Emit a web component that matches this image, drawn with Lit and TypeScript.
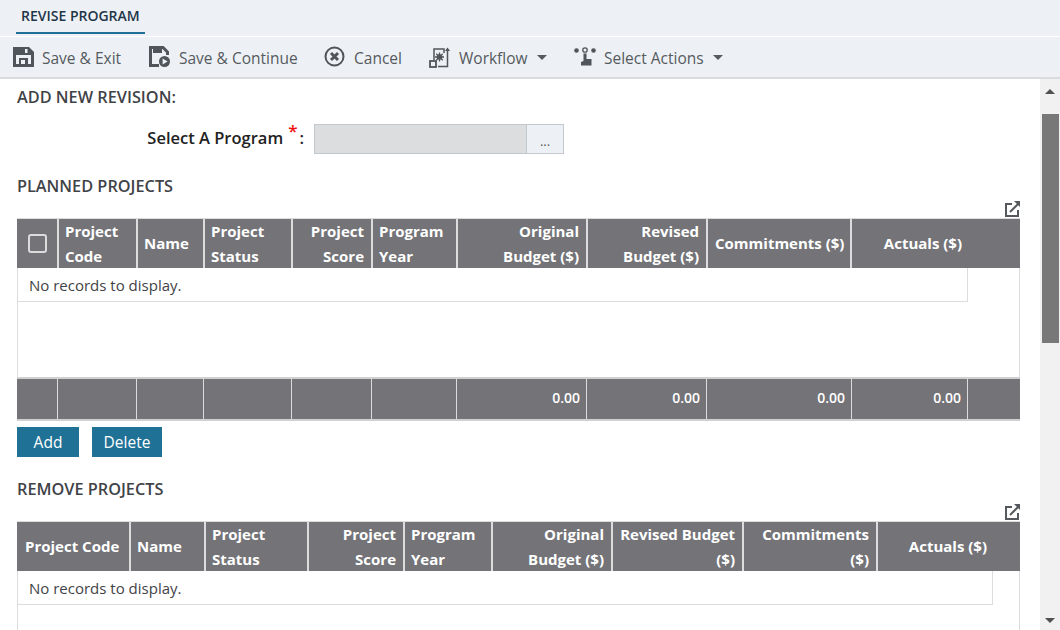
import { LitElement, html, css, svg } from "lit";
import { customElement } from "lit/decorators.js";

type Col = { t: string[]; r?: boolean; c?: boolean; i?: boolean };

const saveIcon = svg`<path d="M0 1h16l5 5v15H0z" fill="#50555b"/><path d="M3 9h15v9h-3v-6H6v6H3z" fill="#edf1f5"/><rect x="12" y="3" width="2.5" height="4" fill="#edf1f5"/><rect x="8" y="14" width="4" height="4" fill="#edf1f5"/>`;
const saveContIcon = svg`<path d="M10 19.5H1.5V1.5h12.5l4.5 4.5v3" fill="none" stroke="#50555b" stroke-width="3"/><path d="M4 2h9v5H4z" fill="#50555b"/><circle cx="15.5" cy="15.5" r="5.5" fill="#50555b"/><path d="M13.6 12.5l5 3-5 3z" fill="#edf1f5"/>`;
const cancelIcon = svg`<circle cx="10.5" cy="10.5" r="9" fill="none" stroke="#50555b" stroke-width="2"/><path d="M7 7l7 7M14 7l-7 7" stroke="#50555b" stroke-width="3"/>`;
const workflowIcon = svg`<path d="M5 14V3h10v4" fill="none" stroke="#50555b" stroke-width="1.5"/><path d="M9 20.5h9.5V3" fill="none" stroke="#50555b" stroke-width="1.5"/><rect x="1" y="15" width="6" height="6" fill="none" stroke="#50555b" stroke-width="1.8"/><circle cx="10.5" cy="11" r="2.8" fill="#50555b"/><path d="M10.5 6.5v9M6 11h9M7.3 7.8l6.4 6.4M13.7 7.8l-6.4 6.4" stroke="#50555b" stroke-width="1.3"/><path d="M16 5l2.5-3.5L21 5z" fill="#50555b"/>`;
const actionsIcon = svg`<circle cx="2.5" cy="4.5" r="2.3" fill="#50555b"/><circle cx="11" cy="4" r="2.2" fill="none" stroke="#50555b" stroke-width="1.3"/><circle cx="19.5" cy="4.5" r="2.3" fill="#50555b"/><path d="M9.5 7.5h3V13h5v6.5H7V16l2.5-1z" fill="#50555b"/>`;
const popIcon = svg`<path d="M8 3H2v12h12V9" fill="none" stroke="#55585c" stroke-width="2"/><path d="M6 11l8-8" stroke="#55585c" stroke-width="2"/><path d="M10 0h6v6z" fill="#55585c"/>`;

const planned: Col[] = [
  { t: [""], c: true },
  { t: ["Project", "Code"] },
  { t: ["Name"] },
  { t: ["Project", "Status"] },
  { t: ["Project", "Score"], r: true },
  { t: ["Program", "Year"] },
  { t: ["Original", "Budget ($)"], r: true },
  { t: ["Revised", "Budget ($)"], r: true },
  { t: ["Commitments ($)"], i: true },
  { t: ["Actuals ($)"], r: true },
];
const plannedGrid = "41px 79px 67px 88px 80px 85px 130px 120px 144px 117px 52px";
const plannedFoot = "41px 79px 67px 88px 80px 85px 130px 120px 145px 116px 52px";
const removed: Col[] = [
  { t: ["Project Code"], i: true },
  { t: ["Name"] },
  { t: ["Project", "Status"] },
  { t: ["Project", "Score"], r: true },
  { t: ["Program", "Year"] },
  { t: ["Original", "Budget ($)"], r: true },
  { t: ["Revised Budget", "($)"], r: true },
  { t: ["Commitments", "($)"], r: true },
  { t: ["Actuals ($)"], r: true },
];
const removedGrid = "113px 75px 103px 96px 88px 120px 131px 134px 116px 27px";

@customElement("app-root")
export class AppRoot extends LitElement {
  static styles = css`
    :host { display: block; width: 1060px; height: 630px; overflow: hidden; background: #fff;
      font-family: "Open Sans", "Liberation Sans", sans-serif; color: #3f4347; }
    * { box-sizing: border-box; }
    .tabs { height: 36px; background: #edf1f5; padding-left: 16px; display: flex; }
    .tab { width: 129px; height: 34px; border-bottom: 2px solid #1f6f97; color: #1f3548; font-size: 14px; font-weight: 600;
      padding: 6px 0 0 5px; line-height: 19px; white-space: nowrap; }
    .toolbar { height: 42px; margin-top: 1px; background: #edf1f5; border-bottom: 2px solid #d9dcdf; display: flex; align-items: center;
      padding: 0 0 1px 13px; font-size: 15.5px; color: #555a60; }
    .tool { display: flex; align-items: center; }
    .tool svg { display: block; }
    .tool span { margin-left: 8px; line-height: 20px; padding-top: 3px; }
    .tool.exit { width: 136px; }
    .tool.cont { width: 175px; }
    .tool.cancel { width: 105px; }
    .tool.flow { width: 145px; }
    .tool.cancel span { margin-left: 9px; }
    .caret { width: 0; height: 0; border: 5px solid transparent; border-top: 5px solid #555a60; border-bottom: 0; margin-left: 9px; margin-top: 2px; }
    .main { display: flex; height: 551px; }
    .content { width: 1040px; padding-left: 17px; overflow: hidden; }
    .scroll { width: 20px; background: #f1f1f1; display: flex; flex-direction: column; align-items: center; }
    .up { width: 0; height: 0; border: 5px solid transparent; border-bottom: 5px solid #505050; border-top: 0; margin-top: 10px; }
    .thumb { width: 17px; height: 229px; background: #787878; margin: 20px 0 0 1px; }
    .down { width: 0; height: 0; border: 5px solid transparent; border-top: 5px solid #505050; border-bottom: 0; margin-top: auto; margin-bottom: 7px; }
    h2 { margin: 0; font-size: 16.3px; line-height: 20px; font-weight: 600; color: #3f4347; white-space: nowrap; }
    .h-add { padding-top: 8px; height: 28px; }
    .field { display: flex; height: 30px; margin-top: 17px; }
    .label { width: 297px; display: flex; justify-content: flex-end; align-items: center; color: #222; font-weight: 600; font-size: 16.5px; white-space: nowrap; padding-bottom: 4px; }
    .star { color: #f01010; font-size: 17px; line-height: 17px; margin: -13px 0 0 5px; font-weight: 600; }
    .colon { margin-left: 2px; margin-right: 10px; }
    .input { width: 213px; height: 30px; background: #dcdddf; border: 1px solid #c3c8cc; }
    .dots { width: 37px; height: 30px; background: #edf1f5; border: 1px solid #c3c8cc; border-left: 0; color: #555; font-size: 13px; text-align: center; line-height: 32px; }
    .h-planned { margin-top: 22px; }
    .pop { display: flex; justify-content: flex-end; width: 1003px; height: 16px; margin-top: 5px; }
    .table { width: 1003px; border: 1px solid #dcdcdc; border-top: 0; border-bottom: 0; }
    .table.planned { height: 203px; margin-top: 1px; display: flex; flex-direction: column; }
    .table.removed { height: 200px; margin-top: 1px; }
    .head { display: grid; height: 50px; background: #737378; border-top: 1px solid #dcdcdc; margin: 0 -1px; padding: 0 0 0 1px; }
    .th { border-right: 2px solid #dcdcdc; color: #fff; font-weight: 700; font-size: 15px; line-height: 25px; padding: 0 7px 0 6px;
      display: flex; flex-direction: column; justify-content: center; white-space: nowrap; overflow: hidden; }
    .th.r { text-align: right; }
    .th.i { padding-left: 7px; }
    .th.c { align-items: center; padding: 0; }
    .th:last-child { border-right: 0; }
    .cb { width: 19px; height: 19px; border: 2px solid #dcdcdc; border-radius: 3px; background: #737378; }
    .none { height: 34px; font-size: 15px; color: #3f4347; border-right: 1px solid #dcdcdc; border-bottom: 1px solid #dcdcdc; padding: 7px 11px; line-height: 20px; white-space: nowrap; }
    .planned .none { width: 950px; }
    .removed .none { width: 975px; }
    .spacer { flex: 1; }
    .foot { display: grid; height: 44px; background: #737378; border-top: 2px solid #d0d0d0; border-bottom: 2px solid #d0d0d0; margin: 0 -1px; }
    .tf { border-right: 1px solid #dcdcdc; color: #fff; font-weight: 600; font-size: 14px; text-align: right; padding: 0 6px; line-height: 37px; }
    .tf:last-child { border-right: 0; }
    .btns { display: flex; gap: 13px; margin-top: 6px; }
    .btn { height: 30px; background: #1f7196; color: #fff; font-size: 15.5px; line-height: 30px; text-align: center; }
    .btn.add { width: 62px; }
    .btn.del { width: 70px; }
    .h-remove { margin-top: 22px; }
  `;

  private table(cols: Col[], grid: string) {
    return html`<div class="head" style="grid-template-columns:${grid}">
      ${cols.map(
        (c) => html`<div class="th ${c.r ? "r" : ""} ${c.c ? "c" : ""} ${c.i ? "i" : ""}">
          ${c.c ? html`<div class="cb"></div>` : c.t.map((l) => html`<div>${l}</div>`)}
        </div>`
      )}
    </div>`;
  }

  render() {
    const foot = ["", "", "", "", "", "", "0.00", "0.00", "0.00", "0.00", ""];
    return html`
      <div class="tabs"><div class="tab">REVISE PROGRAM</div></div>
      <div class="toolbar">
        <div class="tool exit"><svg width="21" height="22" viewBox="0 0 21 22">${saveIcon}</svg><span>Save &amp; Exit</span></div>
        <div class="tool cont"><svg width="22" height="22" viewBox="0 0 22 22">${saveContIcon}</svg><span>Save &amp; Continue</span></div>
        <div class="tool cancel"><svg width="21" height="21" viewBox="0 0 21 21">${cancelIcon}</svg><span>Cancel</span></div>
        <div class="tool flow"><svg width="22" height="22" viewBox="0 0 22 22">${workflowIcon}</svg><span>Workflow</span><i class="caret"></i></div>
        <div class="tool"><svg width="22" height="21" viewBox="0 0 22 21">${actionsIcon}</svg><span>Select Actions</span><i class="caret"></i></div>
      </div>
      <div class="main">
        <div class="content">
          <h2 class="h-add">ADD NEW REVISION:</h2>
          <div class="field">
            <div class="label">Select A Program<span class="star">*</span><span class="colon">:</span></div>
            <div class="input"></div><div class="dots">...</div>
          </div>
          <h2 class="h-planned">PLANNED PROJECTS</h2>
          <div class="pop"><svg width="16" height="16" viewBox="0 0 16 16">${popIcon}</svg></div>
          <div class="table planned">
            ${this.table(planned, plannedGrid)}
            <div class="none">No records to display.</div>
            <div class="spacer"></div>
            <div class="foot" style="grid-template-columns:${plannedFoot}">
              ${foot.map((f) => html`<div class="tf">${f}</div>`)}
            </div>
          </div>
          <div class="btns">
            <div class="btn add">Add</div>
            <div class="btn del">Delete</div>
          </div>
          <h2 class="h-remove">REMOVE PROJECTS</h2>
          <div class="pop"><svg width="16" height="16" viewBox="0 0 16 16">${popIcon}</svg></div>
          <div class="table removed">
            ${this.table(removed, removedGrid)}
            <div class="none">No records to display.</div>
          </div>
        </div>
        <div class="scroll"><i class="up"></i><i class="thumb"></i><i class="down"></i></div>
      </div>
    `;
  }
}
